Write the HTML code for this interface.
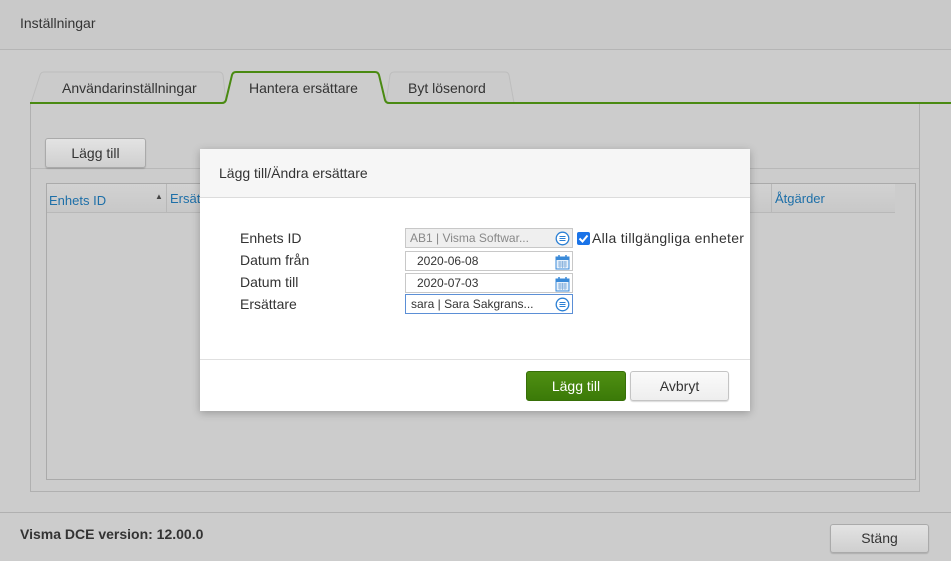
<!DOCTYPE html>
<html><head><meta charset="utf-8"><style>
*{box-sizing:border-box;margin:0;padding:0}
body{width:951px;height:561px;background:#cccccc;font-family:"Liberation Sans","DejaVu Sans",sans-serif;font-size:14px;color:#333;position:relative;overflow:hidden}
.a{position:absolute}
.btn{position:absolute;border:1px solid #aaa;border-radius:3px;background:linear-gradient(#e3e3e3,#cfcfcf);text-align:center;font-size:14px;color:#333;box-shadow:0 1px 1px rgba(0,0,0,.15)}
.inp{position:absolute;left:405px;width:168px;height:20px;border:1px solid #c8c8c8;background:#fff;font-size:12px;line-height:18px;color:#333;padding-left:11px}
.lbl{position:absolute;left:240px;font-size:14px;color:#333}
.ic{position:absolute;right:2px;top:2px}
</style></head><body>
<div class="a" style="left:0;top:0;width:951px;height:50px;background:#c9c9c9;border-bottom:1px solid #b5b5b5"></div>
<div class="a" style="left:20px;top:15px;font-size:14px">Inställningar</div>
<svg class="a" style="left:0;top:0" width="951" height="110">
<path d="M31 103 L40 75 Q41 72 44 72 L219 72 Q222 72 223 75 L226 103" fill="#cbcbcb" stroke="#bdbdbd"/>
<path d="M386 103 L390 75 Q391 72 394 72 L505 72 Q508 72 509 75 L514 103" fill="#cbcbcb" stroke="#bdbdbd"/>
<path d="M30 103 L222 103 Q225 103 226 100 L232 75 Q233 72 236 72 L375 72 Q378 72 379 75 L385 100 Q386 103 389 103 L951 103" fill="#cccccc" stroke="#4a8a12" stroke-width="2"/>
</svg>
<div class="a" style="left:62px;top:80px;font-size:14px">Användarinställningar</div>
<div class="a" style="left:249px;top:80px;font-size:14px">Hantera ersättare</div>
<div class="a" style="left:408px;top:80px;font-size:14px">Byt lösenord</div>
<div class="a" style="left:30px;top:104px;width:890px;height:388px;border:1px solid #b0b0b0;border-top:none"></div>
<div class="a" style="left:31px;top:168px;width:888px;height:1px;background:#b8b8b8"></div>
<div class="btn" style="left:45px;top:138px;width:101px;height:30px;line-height:28px">Lägg till</div>
<div class="a" style="left:46px;top:183px;width:870px;height:297px;border:1px solid #aaa"></div>
<div class="a" style="left:47px;top:184px;width:848px;height:29px;background:linear-gradient(#d2d2d2,#c8c8c8);border-bottom:1px solid #b8b8b8"></div>
<div class="a" style="left:49px;top:193px;font-size:13px;color:#1d6fa8">Enhets ID</div>
<div class="a" style="left:155px;top:192px;font-size:8px;color:#444">▲</div>
<div class="a" style="left:166px;top:184px;width:1px;height:29px;background:#b8b8b8"></div>
<div class="a" style="left:170px;top:191px;font-size:13px;color:#1d6fa8">Ersät</div>
<div class="a" style="left:771px;top:184px;width:1px;height:29px;background:#b8b8b8"></div>
<div class="a" style="left:775px;top:191px;font-size:13px;color:#1d6fa8">Åtgärder</div>
<div class="a" style="left:0;top:512px;width:951px;height:1px;background:#b0b0b0"></div>
<div class="a" style="left:20px;top:526px;font-size:14px;font-weight:bold;color:#333">Visma DCE version: 12.00.0</div>
<div class="btn" style="left:830px;top:524px;width:99px;height:29px;line-height:27px">Stäng</div>

<div class="a" style="left:200px;top:149px;width:550px;height:262px;background:#fff;box-shadow:0 2px 8px rgba(0,0,0,.25)"></div>
<div class="a" style="left:200px;top:149px;width:550px;height:49px;background:#f6f6f6;border-bottom:1px solid #dcdcdc"></div>
<div class="a" style="left:219px;top:165px;font-size:14px;color:#333">Lägg till/Ändra ersättare</div>
<div class="lbl" style="top:230px">Enhets ID</div>
<div class="lbl" style="top:252px">Datum från</div>
<div class="lbl" style="top:274px">Datum till</div>
<div class="lbl" style="top:296px">Ersättare</div>
<div class="inp" style="top:228px;background:#efefef;color:#888;padding-left:4px">AB1 | Visma Softwar...<svg class="ic" width="15" height="15" viewBox="0 0 15 15"><circle cx="7.5" cy="7.5" r="6.3" fill="#fff" stroke="#2a7fd4" stroke-width="1.3"/><path d="M4.5 5.5h6M4.5 7.5h6M4.5 9.5h6" stroke="#2a7fd4" stroke-width="1.1"/></svg></div>
<div class="inp" style="top:251px">2020-06-08<svg class="ic" width="15" height="16" viewBox="0 0 15 16"><rect x="1" y="3" width="13" height="12" fill="#e8f1fb" stroke="#3a8ad8"/><rect x="1" y="3" width="13" height="3" fill="#3a8ad8"/><path d="M4 1v4M11 1v4" stroke="#3a8ad8" stroke-width="1.5"/><path d="M3 8h9M3 10h9M3 12h9M5 7v7M7.5 7v7M10 7v7" stroke="#7aa8d8" stroke-width=".7"/></svg></div>
<div class="inp" style="top:273px">2020-07-03<svg class="ic" width="15" height="16" viewBox="0 0 15 16"><rect x="1" y="3" width="13" height="12" fill="#e8f1fb" stroke="#3a8ad8"/><rect x="1" y="3" width="13" height="3" fill="#3a8ad8"/><path d="M4 1v4M11 1v4" stroke="#3a8ad8" stroke-width="1.5"/><path d="M3 8h9M3 10h9M3 12h9M5 7v7M7.5 7v7M10 7v7" stroke="#7aa8d8" stroke-width=".7"/></svg></div>
<div class="inp" style="top:294px;border-color:#5b8fd6;padding-left:5px">sara | Sara Sakgrans...<svg class="ic" width="15" height="15" viewBox="0 0 15 15"><circle cx="7.5" cy="7.5" r="6.3" fill="#fff" stroke="#2a7fd4" stroke-width="1.3"/><path d="M4.5 5.5h6M4.5 7.5h6M4.5 9.5h6" stroke="#2a7fd4" stroke-width="1.1"/></svg></div>
<div class="a" style="left:577px;top:232px;width:13px;height:13px;background:#1a73e8;border-radius:2px"><svg width="13" height="13" viewBox="0 0 13 13"><path d="M2.5 6.5l3 3 5-6" stroke="#fff" stroke-width="2" fill="none"/></svg></div>
<div class="a" style="left:592px;top:230px;font-size:14px;color:#333;letter-spacing:0.3px">Alla tillgängliga enheter</div>
<div class="a" style="left:200px;top:359px;width:550px;height:1px;background:#e0e0e0"></div>
<div class="a" style="left:526px;top:371px;width:100px;height:30px;border-radius:3px;background:linear-gradient(#4f8f12,#3b7a08);border:1px solid #376f08;color:#fff;text-align:center;line-height:28px;font-size:14px">Lägg till</div>
<div class="btn" style="left:630px;top:371px;width:99px;height:30px;line-height:28px;background:linear-gradient(#fafafa,#eeeeee);border-color:#c4c4c4">Avbryt</div>
</body></html>
